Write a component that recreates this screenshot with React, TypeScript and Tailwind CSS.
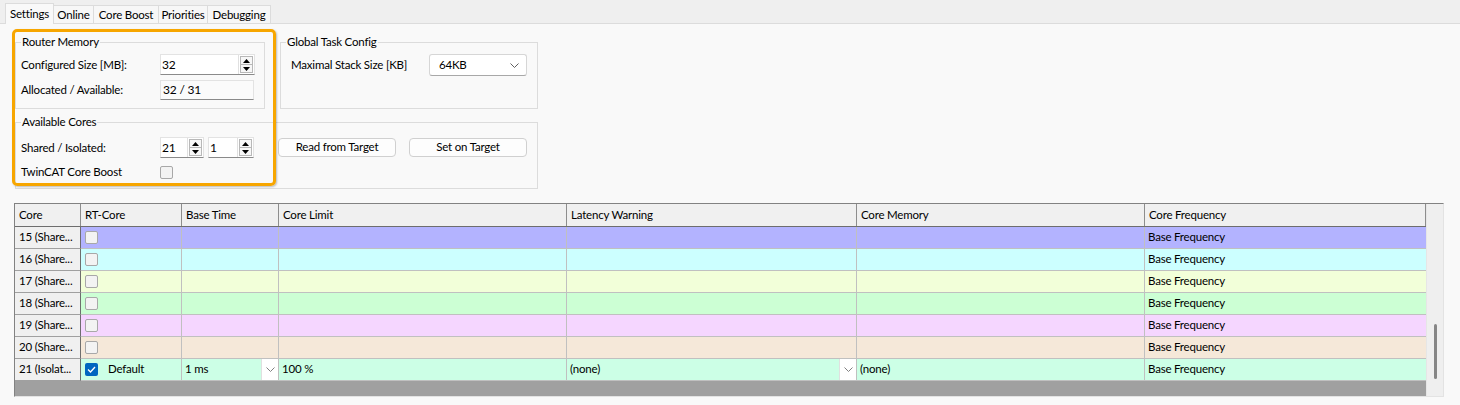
import React from 'react';

const tabs = ['Settings', 'Online', 'Core Boost', 'Priorities', 'Debugging'];
const tabWidths = ['w-[49px]', 'w-[40px]', 'w-[65px]', 'w-[49px]', 'w-[63px]'];

const columns = [
  { title: 'Core', w: 'w-[66px]' },
  { title: 'RT-Core', w: 'w-[101px]' },
  { title: 'Base Time', w: 'w-[97px]' },
  { title: 'Core Limit', w: 'w-[288px]' },
  { title: 'Latency Warning', w: 'w-[290px]' },
  { title: 'Core Memory', w: 'w-[288px]' },
  { title: 'Core Frequency', w: 'w-[281px]' },
];

const rows = [
  { core: '15 (Share...', bg: 'bg-[#b3b3ff]' },
  { core: '16 (Share...', bg: 'bg-[#ccffff]' },
  { core: '17 (Share...', bg: 'bg-[#f2ffd9]' },
  { core: '18 (Share...', bg: 'bg-[#ccffd4]' },
  { core: '19 (Share...', bg: 'bg-[#f5d6ff]' },
  { core: '20 (Share...', bg: 'bg-[#f5e8d9]' },
];

const SpinArrows = () => (
  <div className="flex flex-col w-[16px] h-full border-l border-[#e0e0e0] p-[1px]">
    <div className="flex-1 flex items-center justify-center border border-[#b8b8b8] bg-[#f7f7f7]">
      <svg width="7" height="4" viewBox="0 0 7 4"><path d="M0 4 L3.5 0 L7 4 Z" fill="#000" /></svg>
    </div>
    <div className="flex-1 flex items-center justify-center border border-t-0 border-[#b8b8b8] bg-[#f7f7f7]">
      <svg width="7" height="4" viewBox="0 0 7 4"><path d="M0 0 L3.5 4 L7 0 Z" fill="#000" /></svg>
    </div>
  </div>
);

const Spinner = ({ value, w }: { value: string; w: string }) => (
  <div className={`${w} h-[21px] flex bg-white border border-[#e3e3e3] border-b-[#8a8a8a]`}>
    <div className="flex-1 flex items-center pl-[1px] text-[12px]">{value}</div>
    <SpinArrows />
  </div>
);

const Chevron = ({ color = '#606060' }: { color?: string }) => (
  <svg width="9" height="5" viewBox="0 0 9 5">
    <path d="M0.5 0.5 L4.5 4.5 L8.5 0.5" fill="none" stroke={color} strokeWidth="1" />
  </svg>
);

const Checkbox = ({ checked = false }: { checked?: boolean }) =>
  checked ? (
    <div className="w-[13px] h-[13px] rounded-[2px] bg-[#0067c0] flex items-center justify-center">
      <svg width="9" height="7" viewBox="0 0 9 7">
        <path d="M1 3.5 L3.5 6 L8 1" fill="none" stroke="#fff" strokeWidth="1.3" />
      </svg>
    </div>
  ) : (
    <div className="w-[13px] h-[13px] rounded-[2px] bg-[#f3f3f3] border border-[#a8a8a8]" />
  );

const CellDropdown = () => (
  <div className="w-[17px] h-[21px] bg-white border-l border-[#e0e0e0] flex items-center justify-center">
    <Chevron color="#808080" />
  </div>
);

export default function App() {
  return (
    <div className="relative w-[1460px] h-[405px] bg-[#f9f9f9] text-[11.5px] tracking-[-0.2px] text-black font-['Lato','Segoe_UI',sans-serif] overflow-hidden">
      {/* Tab strip */}
      <div className="h-[24px] bg-[#efefef] border-b border-[#dcdcdc] flex items-end pl-[5px]">
        {tabs.map((t, i) =>
          i === 0 ? (
            <div key={t} className={`${tabWidths[i]} h-[21px] -mb-px bg-[#f9f9f9] border border-b-0 border-[#dcdcdc] flex items-center justify-center`}>
              {t}
            </div>
          ) : (
            <div key={t} className={`${tabWidths[i]} h-[18px] bg-[#f7f7f7] border border-l-0 border-b-0 border-[#dcdcdc] flex items-center justify-center`}>
              {t}
            </div>
          )
        )}
      </div>

      <div className="px-[14px] pt-[10px]">
        <div className="pl-px">
          <div className="flex">
            {/* Router Memory */}
            <fieldset className="w-[250px] h-[75px] border border-[#dcdcdc] px-[5px]">
              <legend className="px-[1px] leading-[16px]">Router Memory</legend>
              <div className="flex items-center mt-[4px]">
                <div className="w-[139px]">Configured Size [MB]:</div>
                <Spinner value="32" w="w-[95px]" />
              </div>
              <div className="flex items-center mt-[5px]">
                <div className="w-[139px]">Allocated / Available:</div>
                <div className="w-[94px] h-[20px] flex items-center pl-[2px] text-[12px] bg-[#fbfbfb] border border-[#e3e3e3] border-b-[#8a8a8a]">32 / 31</div>
              </div>
            </fieldset>

            {/* Global Task Config */}
            <fieldset className="ml-[15px] w-[258px] h-[75px] border border-[#dcdcdc] px-[5px]">
              <legend className="px-[1px] leading-[16px]">Global Task Config</legend>
              <div className="flex items-center mt-[4px] pl-[5px]">
                <div className="w-[138px]">Maximal Stack Size [KB]</div>
                <div className="w-[98px] h-[22px] flex items-center justify-between pl-[9px] pr-[7px] bg-white border border-[#d6d6d6] border-b-[#a8a8a8] rounded-[3px]">
                  <span>64KB</span>
                  <Chevron />
                </div>
              </div>
            </fieldset>
          </div>

          {/* Available Cores */}
          <fieldset className="mt-[5px] w-[523px] h-[75px] border border-[#dcdcdc] px-[5px]">
            <legend className="px-[1px] leading-[16px]">Available Cores</legend>
            <div className="flex items-center mt-[7px]">
              <div className="w-[139px]">Shared / Isolated:</div>
              <Spinner value="21" w="w-[44px]" />
              <div className="ml-[4px]">
                <Spinner value="1" w="w-[46px]" />
              </div>
              <button className="ml-[24px] w-[118px] h-[19px] pb-[2px] bg-[#fdfdfd] border border-[#d0d0d0] rounded-[4px] flex items-center justify-center">
                Read from Target
              </button>
              <button className="ml-[13px] w-[118px] h-[19px] pb-[2px] bg-[#fdfdfd] border border-[#d0d0d0] rounded-[4px] flex items-center justify-center">
                Set on Target
              </button>
            </div>
            <div className="flex items-center mt-[6px] h-[16px]">
              <div className="w-[139px]">TwinCAT Core Boost</div>
              <Checkbox />
            </div>
          </fieldset>
        </div>

        {/* Core table */}
        <div className="mt-[14px] w-[1430px] h-[194px] flex border-l border-t border-[#828282] border-r-[#e3e3e3] border-b-[#e3e3e3] border-r border-b">
          <div className="w-[1411px] flex flex-col">
            <div className="flex h-[23px] bg-[#f0f0f0] border-b border-[#6e6e6e]">
              {columns.map((c) => (
                <div key={c.title} className={`${c.w} h-full flex items-center pl-[4px] pb-px border-r border-[#8d8d8d]`}>
                  {c.title}
                </div>
              ))}
            </div>
            {rows.map((r) => (
              <div key={r.core} className="flex h-[22px]">
                <div className="w-[66px] h-full flex items-center pl-[4px] pb-px bg-[#f0f0f0] border-r border-b border-r-[#6e6e6e] border-b-[#a0a0a0]">
                  {r.core}
                </div>
                <div className={`w-[101px] h-full flex items-center pl-[4px] ${r.bg} border-r border-b border-[#c0c0c0]`}>
                  <Checkbox />
                </div>
                <div className={`w-[97px] h-full ${r.bg} border-r border-b border-[#c0c0c0]`} />
                <div className={`w-[288px] h-full ${r.bg} border-r border-b border-[#c0c0c0]`} />
                <div className={`w-[290px] h-full ${r.bg} border-r border-b border-[#c0c0c0]`} />
                <div className={`w-[288px] h-full ${r.bg} border-r border-b border-[#c0c0c0]`} />
                <div className={`w-[281px] h-full flex items-center pl-[3px] pb-px ${r.bg} border-b border-[#c0c0c0]`}>
                  Base Frequency
                </div>
              </div>
            ))}
            <div className="flex h-[22px] bg-[#ccffe6]">
              <div className="w-[66px] h-full flex items-center pl-[4px] pb-px bg-[#f0f0f0] border-r border-b border-r-[#6e6e6e] border-b-[#a0a0a0]">
                21 (Isolat...
              </div>
              <div className="w-[101px] h-full flex items-center pl-[4px] border-r border-b border-[#c0c0c0]">
                <Checkbox checked />
                <span className="ml-[10px] pb-px">Default</span>
              </div>
              <div className="w-[97px] h-full flex items-center justify-between pl-[3px] border-r border-b border-[#c0c0c0]">
                <span className="pb-px">1 ms</span>
                <CellDropdown />
              </div>
              <div className="w-[288px] h-full flex items-center pl-[3px] pb-px border-r border-b border-[#c0c0c0]">100 %</div>
              <div className="w-[290px] h-full flex items-center justify-between pl-[3px] border-r border-b border-[#c0c0c0]">
                <span className="pb-px">(none)</span>
                <CellDropdown />
              </div>
              <div className="w-[288px] h-full flex items-center pl-[3px] pb-px border-r border-b border-[#c0c0c0]">(none)</div>
              <div className="w-[281px] h-full flex items-center pl-[3px] pb-px border-b border-[#c0c0c0]">Base Frequency</div>
            </div>
            <div className="flex-1 bg-[#a0a0a0]" />
          </div>
          {/* Scrollbar */}
          <div className="w-[17px] h-full bg-[#efefef] border-l border-[#e6e6e6] flex flex-col items-center pt-[120px]">
            <div className="w-[3px] h-[55px] rounded-full bg-[#868686]" />
          </div>
        </div>
      </div>

      {/* Highlight frame */}
      <div className="absolute left-[12px] top-[29px] w-[264px] h-[157px] border-[3px] border-[#f7a600] rounded-[5px] shadow-[1px_1px_2px_rgba(0,0,0,0.25)] pointer-events-none" />
    </div>
  );
}
